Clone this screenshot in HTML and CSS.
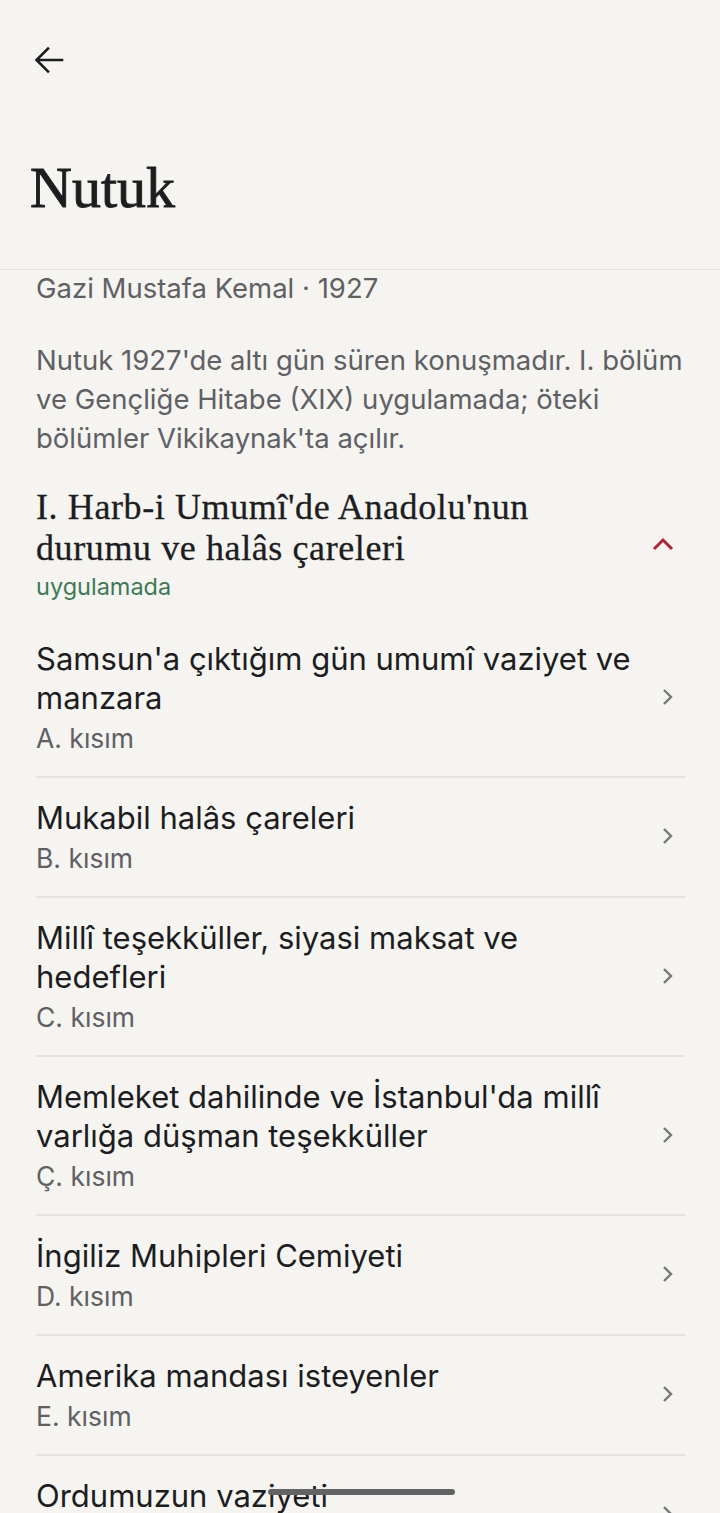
FILE: index.html
```html
<!DOCTYPE html>
<html lang="tr">
<head>
<meta charset="utf-8">
<title>Nutuk</title>
<link rel="stylesheet" href="styles.css">
</head>
<body>
<header class="topbar">
  <button class="back" aria-label="Geri">
    <svg width="32" height="32" viewBox="0 0 32 32"><path d="M29 16H4M15 4.5 3.5 16 15 27.5" fill="none" stroke="#1d1d1f" stroke-width="2.6" stroke-linecap="square"/></svg>
  </button>
  <h1 class="title">Nutuk</h1>
</header>
<main class="content">
  <p class="meta">Gazi Mustafa Kemal · 1927</p>
  <p class="intro">Nutuk 1927'de altı gün süren konuşmadır. I. bölüm ve Gençliğe Hitabe (XIX) uygulamada; öteki bölümler Vikikaynak'ta açılır.</p>
  <section class="section">
    <div class="section-head">
      <div class="section-text">
        <h2 class="section-title">I. Harb-i Umumî'de Anadolu'nun durumu ve halâs çareleri</h2>
        <div class="section-status">uygulamada</div>
      </div>
      <svg class="chev-up" width="24" height="16" viewBox="0 0 24 16"><path d="M3 13 12 4l9 9" fill="none" stroke="#b0243a" stroke-width="3"/></svg>
    </div>
    <ul class="list">
      <li class="item"><div class="item-text"><div class="item-title">Samsun'a çıktığım gün umumî vaziyet ve manzara</div><div class="item-sub">A. kısım</div></div><svg class="chev" width="14" height="20" viewBox="0 0 14 20"><path d="M3 3l7 7-7 7" fill="none" stroke="#76777a" stroke-width="2.4"/></svg></li>
      <li class="item"><div class="item-text"><div class="item-title">Mukabil halâs çareleri</div><div class="item-sub">B. kısım</div></div><svg class="chev" width="14" height="20" viewBox="0 0 14 20"><path d="M3 3l7 7-7 7" fill="none" stroke="#76777a" stroke-width="2.4"/></svg></li>
      <li class="item"><div class="item-text"><div class="item-title">Millî teşekküller, siyasi maksat ve hedefleri</div><div class="item-sub">C. kısım</div></div><svg class="chev" width="14" height="20" viewBox="0 0 14 20"><path d="M3 3l7 7-7 7" fill="none" stroke="#76777a" stroke-width="2.4"/></svg></li>
      <li class="item"><div class="item-text"><div class="item-title">Memleket dahilinde ve İstanbul'da millî varlığa düşman teşekküller</div><div class="item-sub">Ç. kısım</div></div><svg class="chev" width="14" height="20" viewBox="0 0 14 20"><path d="M3 3l7 7-7 7" fill="none" stroke="#76777a" stroke-width="2.4"/></svg></li>
      <li class="item"><div class="item-text"><div class="item-title">İngiliz Muhipleri Cemiyeti</div><div class="item-sub">D. kısım</div></div><svg class="chev" width="14" height="20" viewBox="0 0 14 20"><path d="M3 3l7 7-7 7" fill="none" stroke="#76777a" stroke-width="2.4"/></svg></li>
      <li class="item"><div class="item-text"><div class="item-title">Amerika mandası isteyenler</div><div class="item-sub">E. kısım</div></div><svg class="chev" width="14" height="20" viewBox="0 0 14 20"><path d="M3 3l7 7-7 7" fill="none" stroke="#76777a" stroke-width="2.4"/></svg></li>
      <li class="item"><div class="item-text"><div class="item-title">Ordumuzun vaziyeti</div><div class="item-sub">F. kısım</div></div><svg class="chev" width="14" height="20" viewBox="0 0 14 20"><path d="M3 3l7 7-7 7" fill="none" stroke="#76777a" stroke-width="2.4"/></svg></li>
    </ul>
  </section>
</main>
<div class="home-indicator"></div>
</body>
</html>
```
FILE: styles.css
```css
html, body {
  margin: 0;
  padding: 0;
  background: #f5f4f0;
}
body {
  font-family: Inter, "Noto Sans", sans-serif;
  color: #1d1d1f;
  height: 1513px;
  overflow: hidden;
}
.topbar {
  height: 269px;
  border-bottom: 1px solid #e2e1dc;
  display: flex;
  flex-direction: column;
  padding: 0 30px;
  box-sizing: content-box;
}
.back {
  margin: 44px 0 0 3px;
  padding: 0;
  border: 0;
  background: none;
  width: 32px;
  height: 32px;
  display: flex;
}
.title {
  margin: 80px 0 0 0;
  font-family: "Liberation Serif", serif;
  font-weight: 400;
  font-size: 58px;
  line-height: 64px;
  -webkit-text-stroke: 0.9px #1d1d1f;
  color: #1d1d1f;
}
.content {
  padding: 0 35px 0 36px;
}
.meta {
  margin: 0;
  font-size: 27.5px;
  line-height: 36px;
  color: #5f6064;
}
.intro {
  margin: 35px 0 0 0;
  font-size: 27.5px;
  line-height: 39px;
  color: #5f6064;
}
.section-head {
  margin-top: 29px;
  display: flex;
  align-items: center;
}
.section-text {
  flex: 1;
}
.section-title {
  margin: 0;
  font-family: "Liberation Serif", serif;
  font-weight: 400;
  font-size: 36px;
  line-height: 41px;
  letter-spacing: 0.6px;
  -webkit-text-stroke: 0.3px #1d1d1f;
  color: #1d1d1f;
  max-width: 540px;
}
.section-status {
  margin-top: 4px;
  font-size: 23.5px;
  line-height: 28px;
  color: #3c7a56;
}
.chev-up {
  margin-right: 10px;
}
.list {
  list-style: none;
  margin: 18px 0 0 0;
  padding: 0;
}
.item {
  display: flex;
  align-items: center;
  padding: 20px 0 22px;
  border-bottom: 2px solid #e4e3de;
}
.item-text {
  flex: 1;
}
.item-title {
  font-size: 31px;
  line-height: 39px;
  color: #1d1d1f;
  max-width: 605px;
}
.item-sub {
  margin-top: 5px;
  font-size: 26.5px;
  line-height: 32px;
  color: #5f6064;
}
.chev {
  margin-right: 10px;
}
.home-indicator {
  position: fixed;
  left: 268px;
  top: 1489px;
  width: 187px;
  height: 6px;
  border-radius: 3px;
  background: #636363;
}
```
